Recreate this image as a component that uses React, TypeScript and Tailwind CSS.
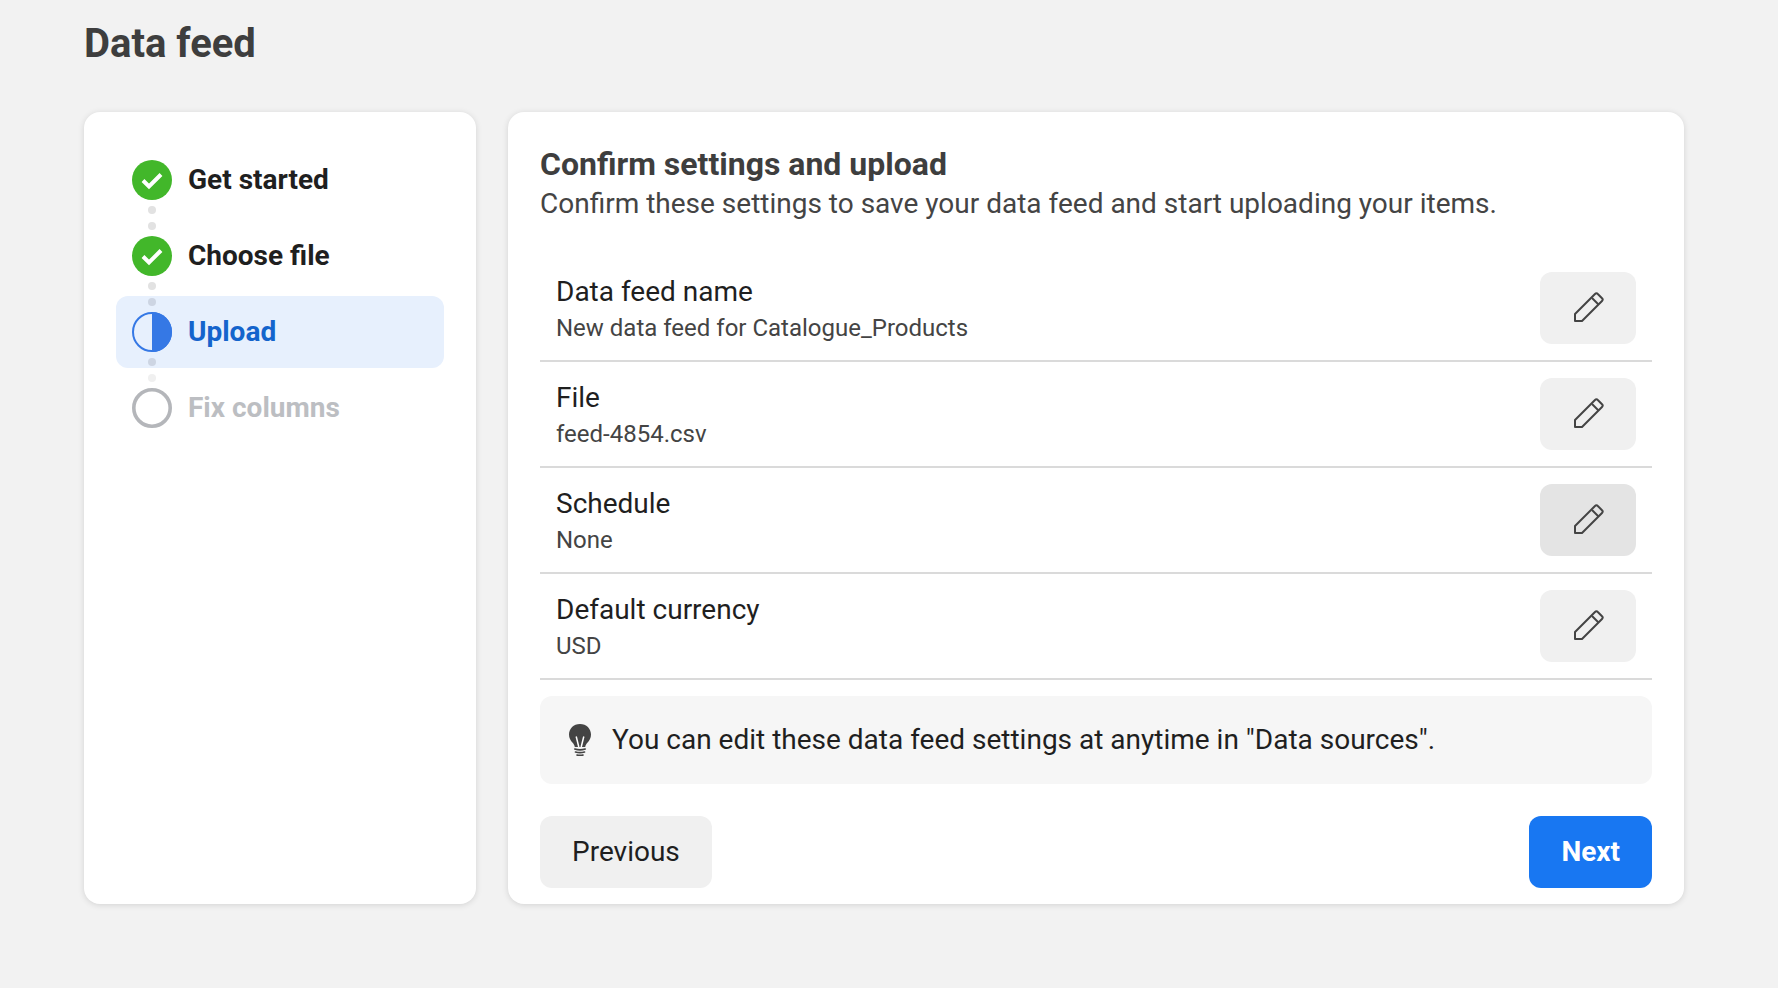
import type { ReactNode } from "react";

type StepState = "done" | "current" | "todo";

const steps: { label: string; state: StepState; dots: string[] }[] = [
  { label: "Get started", state: "done", dots: ["bg-[#e2e2e2]", "bg-[#e2e2e2]"] },
  { label: "Choose file", state: "done", dots: ["bg-[#e2e2e2]", "bg-[#cdd5e3]"] },
  { label: "Upload", state: "current", dots: ["bg-[#cdd5e3]", "bg-[#f0f0f0]"] },
  { label: "Fix columns", state: "todo", dots: [] },
];

const settings = [
  { label: "Data feed name", value: "New data feed for Catalogue_Products" },
  { label: "File", value: "feed-4854.csv" },
  { label: "Schedule", value: "None", hover: true },
  { label: "Default currency", value: "USD" },
];

function StepIcon({ state }: { state: StepState }) {
  if (state === "done") {
    return (
      <svg width="40" height="40" viewBox="0 0 40 40" aria-hidden="true">
        <circle cx="20" cy="20" r="20" fill="#42b72a" />
        <path d="M11 20.500l6 6L29 14.500" fill="none" stroke="#fff" strokeWidth="4" />
      </svg>
    );
  }
  if (state === "current") {
    return (
      <svg width="40" height="40" viewBox="0 0 40 40" aria-hidden="true">
        <circle cx="20" cy="20" r="19" fill="none" stroke="#3578e5" strokeWidth="2" />
        <path d="M20 0a20 20 0 0 1 0 40z" fill="#3578e5" />
      </svg>
    );
  }
  return (
    <svg width="40" height="40" viewBox="0 0 40 40" aria-hidden="true">
      <circle cx="20" cy="20" r="18.2" fill="none" stroke="#b4b6ba" strokeWidth="3.6" />
    </svg>
  );
}

function PencilIcon() {
  return (
    <svg className="mb-[3px] ml-[2px]" width="30" height="30" viewBox="0 0 30 30" fill="none" stroke="#444" strokeWidth="2" strokeLinejoin="round" aria-hidden="true">
      <path d="M1 29V22L21 2c.9-.9 2-.9 2.800 0l4.200 4.200c.9.900.9 1.900 0 2.800L8 29z" />
      <path d="M18 6l6.500 6.500" />
    </svg>
  );
}

function BulbIcon() {
  return (
    <svg width="24" height="32" viewBox="0 0 24 32" aria-hidden="true">
      <path d="M12 0C5.500 0 1 4.700 1 10.500c0 3.500 1.600 6 3.400 8 1.300 1.500 2.200 2.800 2.400 4.500h10.400c.2-1.700 1.100-3 2.400-4.500 1.800-2 3.400-4.500 3.400-8C23 4.700 18.500 0 12 0z" fill="#444" />
      <path d="M8.200 12.500l2.600 10.500M15.800 12.500L13.200 23" fill="none" stroke="#fff" strokeWidth="1.500" />
      <path d="M6.800 25c3.200 1 7.200 1 10.400 0M7.500 28c2.800.9 6.200.9 9 0M9 31c1.900.6 4.100.6 6 0" fill="none" stroke="#444" strokeWidth="1.700" strokeLinecap="round" />
    </svg>
  );
}

function Card({ className, children }: { className: string; children: ReactNode }) {
  return (
    <div className={`rounded-2xl bg-white shadow-[0_1px_6px_rgba(0,0,0,0.13)] ${className}`}>{children}</div>
  );
}

export default function App() {
  return (
    <div className="flex min-h-screen flex-col bg-[#f2f2f2] pl-[84px] font-[Roboto,sans-serif]">
      <h1 className="flex h-[112px] items-start pt-[20px] text-[40px] leading-[48px] font-bold text-[#3e3e3e]">Data feed</h1>

      <div className="flex gap-8">
        <Card className="h-[792px] w-[392px] px-8 py-8">
          <ul className="flex flex-col gap-1">
            {steps.map((step) => (
              <li
                key={step.label}
                className={`relative flex h-[72px] items-center gap-4 rounded-xl px-4 ${step.state === "current" ? "bg-[#e7f0fd]" : ""}`}
              >
                <StepIcon state={step.state} />
                <span
                  className={`text-[28px] font-bold ${
                    step.state === "current" ? "text-[#1464cc]" : step.state === "todo" ? "text-[#bcbec2]" : "text-[#1f1f1f]"
                  }`}
                >
                  {step.label}
                </span>
                {step.dots.length > 0 && (
                  <span className="absolute top-[62px] left-[32px] z-10 flex flex-col gap-2">
                    {step.dots.map((dot, i) => (
                      <span key={i} className={`h-2 w-2 rounded-full ${dot}`} />
                    ))}
                  </span>
                )}
              </li>
            ))}
          </ul>
        </Card>

        <Card className="flex h-[792px] w-[1176px] flex-col px-8 pt-8 pb-4">
          <h2 className="text-[32px] leading-[40px] font-bold text-[#3e3e3e]">Confirm settings and upload</h2>
          <p className="text-[28px] leading-[40px] text-[#444]">Confirm these settings to save your data feed and start uploading your items.</p>

          <div className="mt-8 flex flex-col">
            {settings.map((row) => (
              <div key={row.label} className="flex items-center justify-between border-b-2 border-[#dadada] py-4 pr-4 pl-4">
                <div className="flex flex-col">
                  <span className="text-[28px] leading-[40px] text-[#1f1f1f]">{row.label}</span>
                  <span className="text-[24px] leading-[32px] text-[#444]">{row.value}</span>
                </div>
                <button className={`flex h-[72px] w-[96px] items-center justify-center rounded-xl ${row.hover ? "bg-[#e4e4e4]" : "bg-[#f0f0f0]"}`}>
                  <PencilIcon />
                </button>
              </div>
            ))}
          </div>

          <div className="mt-4 flex h-[88px] items-center gap-[20px] rounded-xl bg-[#f6f6f6] pl-7">
            <BulbIcon />
            <span className="text-[28px] text-[#1f1f1f]">You can edit these data feed settings at anytime in "Data sources".</span>
          </div>

          <div className="mt-8 flex items-center justify-between">
            <button className="h-[72px] rounded-xl bg-[#f0f0f0] px-8 text-[28px] text-[#1f1f1f]">Previous</button>
            <button className="h-[72px] rounded-xl bg-[#1877f2] px-8 text-[28px] font-bold text-white">Next</button>
          </div>
        </Card>
      </div>
    </div>
  );
}
